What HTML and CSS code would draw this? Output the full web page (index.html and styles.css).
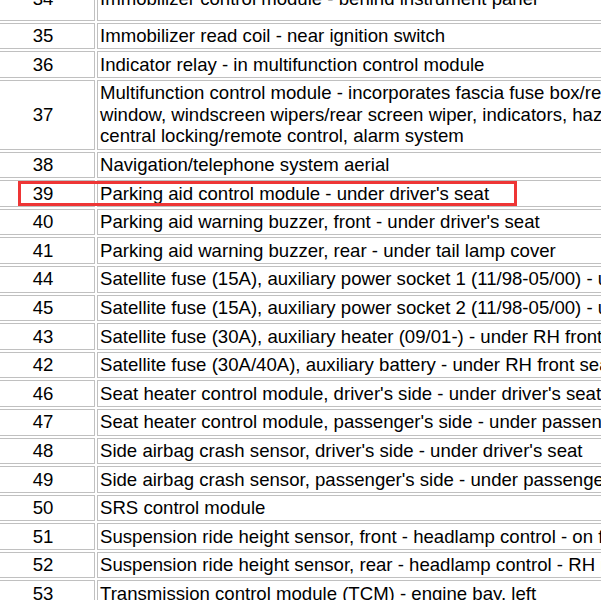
FILE: index.html
```html
<!DOCTYPE html>
<html>
<head>
<meta charset="utf-8">
<link rel="stylesheet" href="styles.css">
</head>
<body>
<div class="page">
  <table class="parts">
    <colgroup><col class="col-num"><col class="col-desc"></colgroup>
    <tr class="cut"><td class="num">34</td><td class="desc">Immobilizer control module - behind instrument panel</td></tr>
    <tr><td class="num">35</td><td class="desc">Immobilizer read coil - near ignition switch</td></tr>
    <tr><td class="num">36</td><td class="desc">Indicator relay - in multifunction control module</td></tr>
    <tr><td class="num">37</td><td class="desc">Multifunction control module - incorporates fascia fuse box/relays, electric<br>window, windscreen wipers/rear screen wiper, indicators, hazard warning lamps,<br>central locking/remote control, alarm system</td></tr>
    <tr><td class="num">38</td><td class="desc">Navigation/telephone system aerial</td></tr>
    <tr><td class="num">39</td><td class="desc">Parking aid control module - under driver's seat</td></tr>
    <tr><td class="num">40</td><td class="desc">Parking aid warning buzzer, front - under driver's seat</td></tr>
    <tr><td class="num">41</td><td class="desc">Parking aid warning buzzer, rear - under tail lamp cover</td></tr>
    <tr><td class="num">44</td><td class="desc">Satellite fuse (15A), auxiliary power socket 1 (11/98-05/00) - under RH front seat</td></tr>
    <tr><td class="num">45</td><td class="desc">Satellite fuse (15A), auxiliary power socket 2 (11/98-05/00) - under RH front seat</td></tr>
    <tr><td class="num">43</td><td class="desc">Satellite fuse (30A), auxiliary heater (09/01-) - under RH front seat</td></tr>
    <tr><td class="num">42</td><td class="desc">Satellite fuse (30A/40A), auxiliary battery - under RH front seat</td></tr>
    <tr><td class="num">46</td><td class="desc">Seat heater control module, driver's side - under driver's seat</td></tr>
    <tr><td class="num">47</td><td class="desc">Seat heater control module, passenger's side - under passenger's seat</td></tr>
    <tr><td class="num">48</td><td class="desc">Side airbag crash sensor, driver's side - under driver's seat</td></tr>
    <tr><td class="num">49</td><td class="desc">Side airbag crash sensor, passenger's side - under passenger's seat</td></tr>
    <tr><td class="num">50</td><td class="desc">SRS control module</td></tr>
    <tr><td class="num">51</td><td class="desc">Suspension ride height sensor, front - headlamp control - on front axle</td></tr>
    <tr><td class="num">52</td><td class="desc">Suspension ride height sensor, rear - headlamp control - RH rear</td></tr>
    <tr><td class="num">53</td><td class="desc">Transmission control module (TCM) - engine bay, left</td></tr>
    <tr><td class="num">54</td><td class="desc">Trailer module - in luggage compartment</td></tr>
  </table>
  <div class="highlight"></div>
</div>
</body>
</html>
```
FILE: styles.css
```css
html, body {
  margin: 0;
  padding: 0;
  overflow: hidden;
  background: #ffffff;
}

.page {
  position: relative;
  width: 601px;
  height: 600px;
  overflow: hidden;
}

.parts {
  margin-top: -17px;
  margin-left: -11px;
  width: 1000px;
  table-layout: fixed;
  border-collapse: separate;
  border-spacing: 2px;
  font-family: "Liberation Sans", Arial, sans-serif;
  font-size: 18.6px;
  line-height: 21.6px;
  color: #000000;
}

.col-num {
  width: 104px;
}

.parts td {
  border: 1px solid #c0c0c0;
  padding: 1.5px 2px;
  vertical-align: middle;
  overflow: hidden;
}

.parts .cut td {
  padding-bottom: 10.5px;
}

.parts .num {
  text-align: center;
}

.parts .desc {
  white-space: nowrap;
}

.highlight {
  position: absolute;
  left: 18px;
  top: 181px;
  width: 499px;
  height: 25px;
  box-sizing: border-box;
  border: 3px solid #ee3535;
}
```
